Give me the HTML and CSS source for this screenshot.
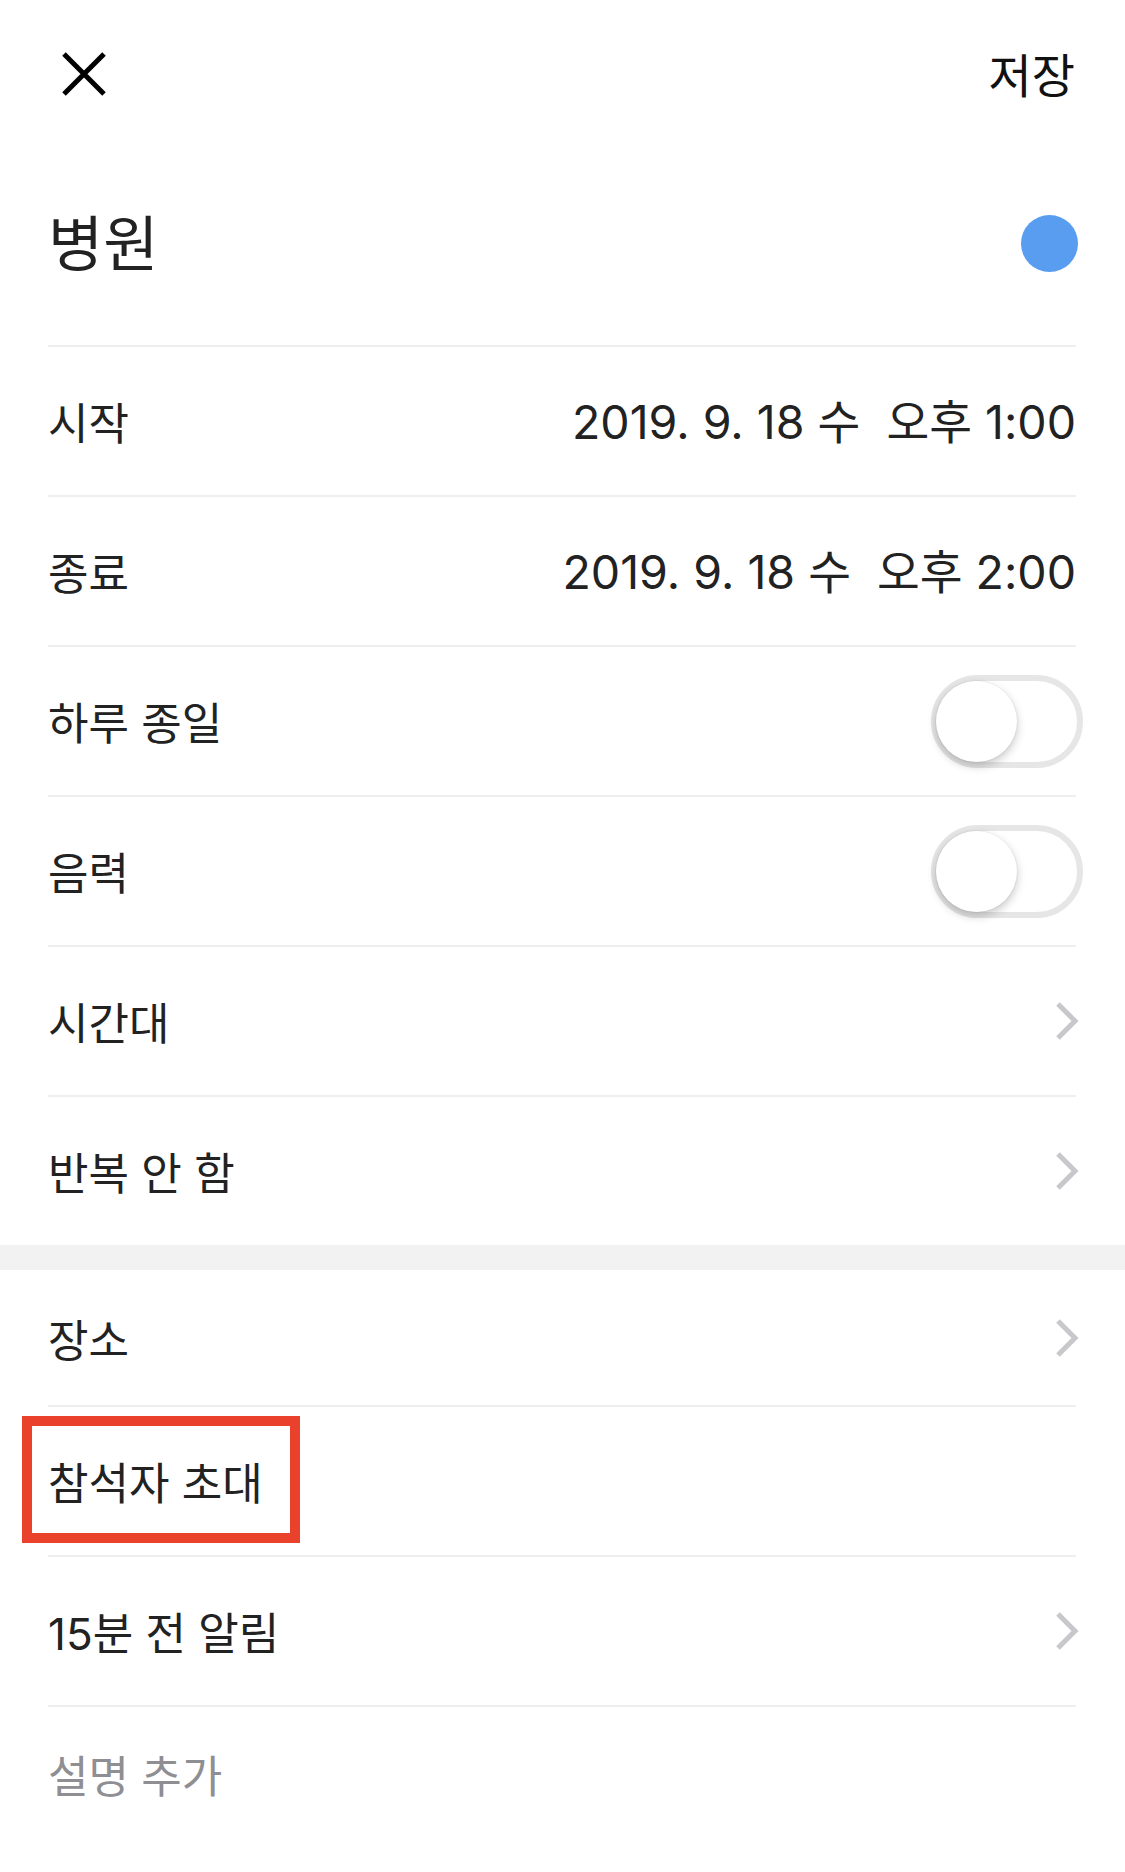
FILE: index.html
```html
<!DOCTYPE html>
<html lang="ko">
<head>
  <meta charset="utf-8" />
  <meta name="viewport" content="width=device-width, initial-scale=1" />
  <title>일정 편집</title>
  <link rel="stylesheet" href="styles.css">
</head>

<body>

  <!-- 상단 바 -->
  <div class="topbar">
    <svg class="close-icon" width="46" height="46" viewBox="0 0 46 46">
      <path d="M3 3 L43 43 M43 3 L3 43" stroke="#000" stroke-width="5" stroke-linecap="butt" />
    </svg>
    <span class="save">저장</span>
  </div>

  <!-- 제목 -->
  <div class="title-row">
    <span class="title">병원</span>
    <span class="color-dot"></span>
  </div>

  <!-- 일정 정보 -->
  <div class="section">
    <div class="row">
      <span class="label">시작</span>
      <span class="value">2019. 9. 18 수<span class="time">오후 1:00</span></span>
    </div>
    <div class="row">
      <span class="label">종료</span>
      <span class="value">2019. 9. 18 수<span class="time">오후 2:00</span></span>
    </div>
    <div class="row">
      <span class="label">하루 종일</span>
      <span class="toggle"><span class="knob"></span></span>
    </div>
    <div class="row">
      <span class="label">음력</span>
      <span class="toggle"><span class="knob"></span></span>
    </div>
    <div class="row">
      <span class="label">시간대</span>
      <svg class="chevron" width="24" height="40" viewBox="0 0 24 40">
        <polyline points="3,3 20,20 3,37" fill="none" stroke="#c7c7cc" stroke-width="5" />
      </svg>
    </div>
    <div class="row">
      <span class="label">반복 안 함</span>
      <svg class="chevron" width="24" height="40" viewBox="0 0 24 40">
        <polyline points="3,3 20,20 3,37" fill="none" stroke="#c7c7cc" stroke-width="5" />
      </svg>
    </div>
  </div>

  <div class="gap-band"></div>

  <!-- 추가 정보 -->
  <div class="section">
    <div class="row first">
      <span class="label">장소</span>
      <svg class="chevron" width="24" height="40" viewBox="0 0 24 40">
        <polyline points="3,3 20,20 3,37" fill="none" stroke="#c7c7cc" stroke-width="5" />
      </svg>
    </div>
    <div class="row invite">
      <span class="label">참석자 초대</span>
      <span class="highlight"></span>
    </div>
    <div class="row">
      <span class="label">15분 전 알림</span>
      <svg class="chevron" width="24" height="40" viewBox="0 0 24 40">
        <polyline points="3,3 20,20 3,37" fill="none" stroke="#c7c7cc" stroke-width="5" />
      </svg>
    </div>
    <div class="row last">
      <span class="label placeholder">설명 추가</span>
    </div>
  </div>

</body>
</html>
```

FILE: styles.css
```css
body {
  font-family: Inter, "Noto Sans CJK KR", sans-serif;
  margin: 0;
  background-color: #fff;
  color: #222;
}

.topbar {
  height: 148px;
  display: flex;
  align-items: center;
  justify-content: space-between;
  padding: 0 50px 0 61px;
}

.close-icon {
  display: block;
}

.save {
  font-size: 47px;
  color: #111;
  margin-top: -4px;
}

.title-row {
  height: 197px;
  display: flex;
  align-items: center;
  justify-content: space-between;
  padding: 0 47px 0 48px;
  box-sizing: border-box;
  padding-bottom: 14px;
}

.title {
  font-size: 60px;
  font-weight: 400;
  color: #222;
}

.color-dot {
  width: 57px;
  height: 57px;
  border-radius: 50%;
  background-color: #589df0;
  margin-top: 8px;
}

.section {
  padding: 0 49px 0 48px;
}

.row {
  position: relative;
  height: 150px;
  box-sizing: border-box;
  border-top: 2px solid #eeeeee;
  display: flex;
  align-items: center;
  justify-content: space-between;
}

.row.first {
  height: 135px;
  border-top: none;
}

.row.last {
  height: 136px;
}

.label {
  font-size: 44px;
}

.placeholder {
  color: #8e8e93;
}

.value {
  font-size: 46.5px;
  color: #222;
  margin-top: -6px;
}

.time {
  margin-left: 26px;
}

.chevron {
  display: block;
  margin-right: -3px;
}

.toggle {
  width: 152px;
  height: 93px;
  box-sizing: border-box;
  border: 6px solid #e6e6e6;
  border-radius: 47px;
  background-color: #fff;
  display: flex;
  align-items: center;
  margin-right: -7px;
}

.knob {
  width: 81px;
  height: 81px;
  border-radius: 50%;
  background-color: #fff;
  margin-left: -1px;
  box-shadow: 0 4px 10px rgba(0, 0, 0, 0.22), 0 0 0 1px rgba(0, 0, 0, 0.04);
}

.gap-band {
  height: 25px;
  background-color: #f2f2f2;
}

/* 강조 표시 상자 */
.highlight {
  position: absolute;
  left: -26px;
  top: 9px;
  width: 278px;
  height: 127px;
  box-sizing: border-box;
  border: 10px solid #e9412b;
}
```
